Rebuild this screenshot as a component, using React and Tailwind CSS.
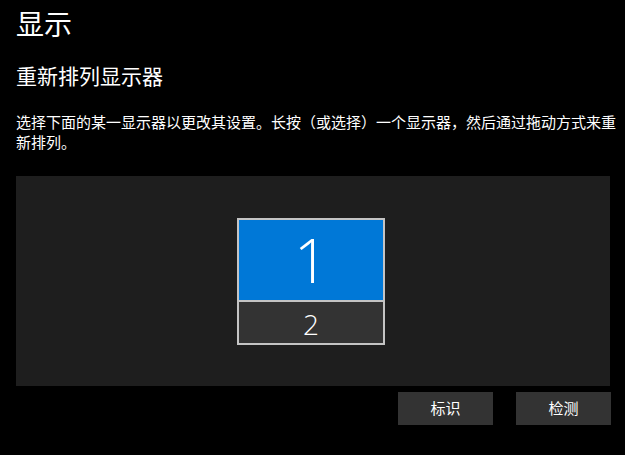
export default function App() {
  const cjk = { fontFamily: '"Noto Sans CJK SC", "Noto Sans", sans-serif' };

  return (
    <div className="w-[625px] h-[455px] overflow-hidden bg-black px-4 text-white" style={cjk}>
      <h1 className="pt-[3px] text-[28px] leading-[40px] font-normal">显示</h1>
      <h2 className="mt-[18px] text-[21px] leading-[28px] font-normal">重新排列显示器</h2>
      <p className="mt-[23px] w-[600px] text-[15px] leading-[20px]">
        选择下面的某一显示器以更改其设置。长按（或选择）一个显示器，然后通过拖动方式来重新排列。
      </p>

      <div className="mt-[24px] flex h-[210px] w-[594px] items-center justify-center bg-[#1e1e1e] pr-[4px]">
        <div className="flex w-[148px] flex-col">
          <div className="flex h-[84px] items-center justify-center border-2 border-[#c4c4c4] bg-[#0078d7]">
            <span className="font-['Open_Sans'] text-[60px] font-light leading-none text-white">1</span>
          </div>
          <div className="flex h-[43px] items-center justify-center border-2 border-t-0 border-[#c4c4c4] bg-[#333333] pt-[4px]">
            <span className="font-['Open_Sans'] text-[28px] font-light leading-none text-white">2</span>
          </div>
        </div>
      </div>

      <div className="mt-[6px] flex w-[595px] justify-end gap-[23px]">
        <button className="h-[33px] w-[95px] bg-[#333333] text-[15px] text-white">标识</button>
        <button className="h-[33px] w-[95px] bg-[#333333] text-[15px] text-white">检测</button>
      </div>
    </div>
  );
}
